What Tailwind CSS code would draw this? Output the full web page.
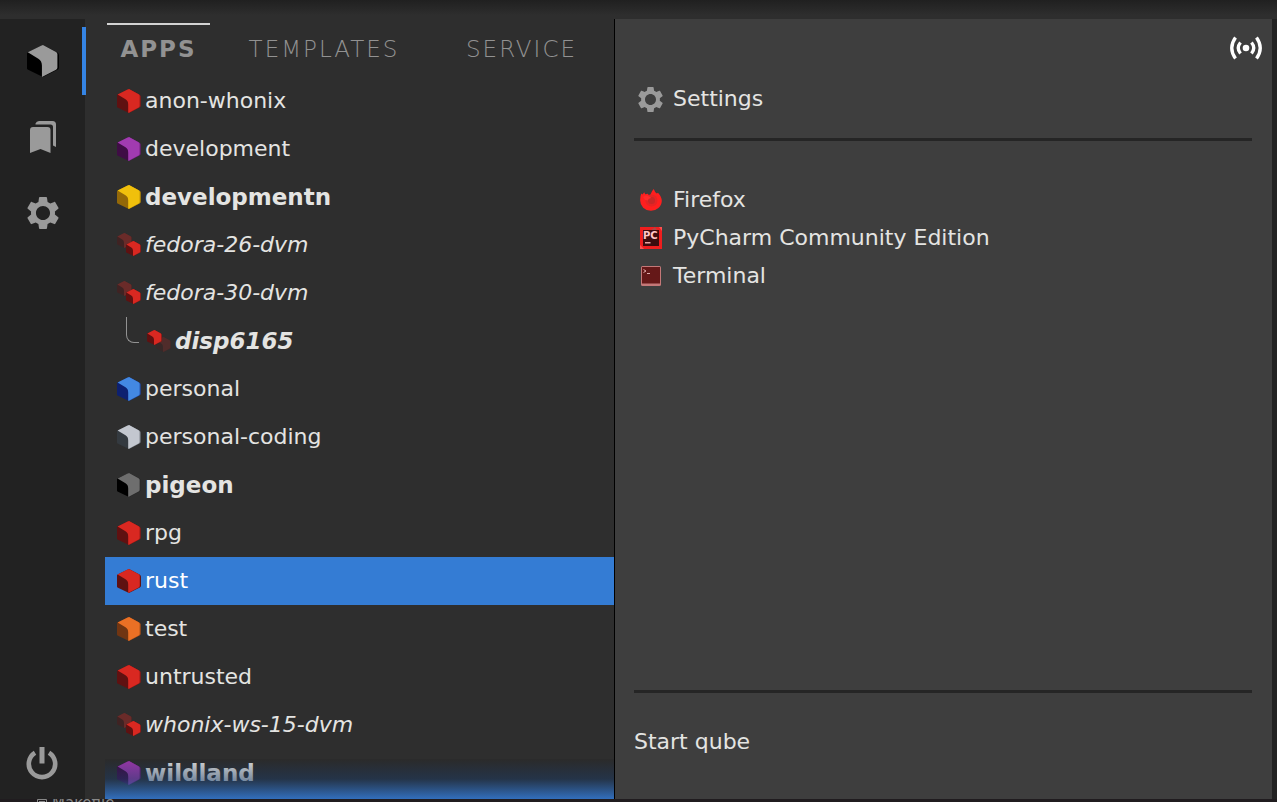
<!DOCTYPE html>
<html lang="en">
<head>
<meta charset="utf-8">
<title>Qubes App Menu</title>
<script src="https://cdn.jsdelivr.net/npm/@tailwindcss/browser@4"></script>
</head>
<body class="h-screen overflow-hidden bg-[#222222] font-['DejaVu_Sans',sans-serif] text-[22px] leading-7 text-[#e4e4e2]">
<svg class="hidden">
  <symbol id="cube-hard" viewBox="0 0 24 24">
    <path d="M12 0 22.500 5.500Q24 6.300 24 7.500V16.800Q24 18 22.800 18.600L12 24 .5 18.400Q0 18 0 17.500V6.500Q0 6 .5 5.600Z"/>
    <path fill="currentColor" d="M12 0 21.800 5.200Q22.800 5.800 22.800 7V16.800Q22.800 17.900 21.800 18.500L11.200 24V15.500Q11.200 11.800 8.500 10.300L.6 5.500 10.500.5Q11.500 0 12 0Z"/>
  </symbol>
  <symbol id="cube" viewBox="0 0 24 24">
    <path d="M12 0 22.300 5.500Q23.700 6.300 23.700 7.500V16.800Q23.700 18 22.500 18.600L12 24 .5 18.400Q0 18 0 17.500V6.500Q0 6 .5 5.600Z"/>
    <path fill="currentColor" opacity=".45" d="M12 0 22.300 5.500Q23.700 6.300 23.700 7.500V16.800Q23.700 18 22.500 18.600L12 24Z"/>
    <path fill="currentColor" d="M12 0 21.500 5.200Q22.600 5.800 22.600 7V16.800Q22.600 17.900 21.500 18.500L11.200 24V15.500Q11.200 11.800 8.500 10.300L.6 5.500 10.500.5Q11.500 0 12 0Z"/>
  </symbol>
  <symbol id="dvm" viewBox="0 0 24 24">
    <g opacity=".35"><use href="#cube" x="0" y="0" width="15" height="15"/></g>
    <use href="#cube" x="9" y="8" width="15" height="15"/>
  </symbol>
  <symbol id="disp" viewBox="0 0 24 24">
    <g opacity=".2"><use href="#cube" x="9" y="8" width="15" height="15"/></g>
    <use href="#cube" x="0" y="1" width="15" height="15"/>
  </symbol>
  <symbol id="gear" viewBox="2 2 20 20">
    <path fill="currentColor" d="M19.430 12.980c.04-.32.07-.64.07-.98s-.03-.66-.07-.98l2.110-1.650c.19-.15.24-.42.12-.64l-2-3.460c-.12-.22-.39-.3-.61-.22l-2.490 1c-.52-.4-1.080-.73-1.690-.98l-.38-2.650C14.460 2.180 14.250 2 14 2h-4c-.25 0-.46.18-.49.42l-.38 2.650c-.61.25-1.170.59-1.690.98l-2.490-1c-.23-.09-.49 0-.61.22l-2 3.460c-.13.22-.07.49.12.64l2.110 1.650c-.04.32-.07.65-.07.98s.03.66.07.98l-2.110 1.650c-.19.15-.24.42-.12.64l2 3.460c.12.22.39.3.61.22l2.490-1c.52.4 1.080.73 1.690.98l.38 2.650c.03.24.24.42.49.42h4c.25 0 .46-.18.49-.42l.38-2.650c.61-.25 1.170-.59 1.690-.98l2.490 1c.23.09.49 0 .61-.22l2-3.460c.12-.22.07-.49-.12-.64l-2.110-1.650zM12 16.400c-2.430 0-4.400-1.970-4.400-4.400s1.970-4.400 4.400-4.400 4.400 1.970 4.400 4.400-1.970 4.400-4.400 4.400z"/>
  </symbol>
</svg>
<div class="flex h-full flex-col">
  <div class="h-[19px] shrink-0 bg-linear-to-b from-[#202020] to-[#2e2e2e] to-80%"></div>
  <div class="grid min-h-0 flex-1 grid-cols-[85px_529fr_658fr_5px] grid-rows-1">
    <nav class="relative z-10 flex flex-col bg-[#222222] pt-2 text-[#9a9a9a]" aria-label="Pages">
      <button class="-mr-px flex h-[68px] items-center justify-center border-r-4 border-[#3584e4]" aria-label="Qubes"><svg class="ml-1 size-8 fill-black"><use href="#cube-hard"/></svg></button>
      <button class="mt-2 flex h-[68px] items-center justify-center" aria-label="Favorites">
        <svg class="h-8 w-[26px]" viewBox="0 0 26 32" fill="currentColor"><path d="M3 6H17.500Q20.500 6 20.500 9V32L10.500 28 0 32V9Q0 6 3 6Z"/><path d="M5.500 3.500V2.500Q6.500 0 9 0H22.500Q26 0 26 3.500V26L23 24.500V6Q23 3.500 20.500 3.500Z"/></svg>
      </button>
      <button class="mt-2 flex h-[68px] items-center justify-center" aria-label="Settings"><svg class="size-8"><use href="#gear"/></svg></button>
      <button class="mt-auto flex h-[72px] items-center justify-center pr-0.5" aria-label="Power">
        <svg class="h-[33px] w-8" viewBox="0 0 32 33" fill="none" stroke="currentColor"><path stroke-width="4.600" d="M9 5.700A13.200 13.200 0 1 0 23 5.700"/><path stroke-width="5" d="M16 0V16.500"/></svg>
      </button>
    </nav>
    <section class="flex min-h-0 min-w-0 flex-col bg-[#2e2e2e] pl-5">
      <div class="flex h-[58px] shrink-0 pt-1 pl-0.5 text-[23px] tracking-[2px] text-[#929292]" role="tablist">
        <button class="h-[50px] w-[103px] border-t-2 border-[#d3d3d3] font-bold" role="tab" aria-selected="true">APPS</button>
        <button class="h-[50px] w-[228px] border-t-2 border-transparent font-extralight" role="tab">TEMPLATES</button>
        <button class="h-[50px] w-[167px] border-t-2 border-transparent font-extralight" role="tab">SERVICE</button>
      </div>
      <div class="relative min-h-0 flex-1 overflow-hidden">
        <ul>
          <li><button class="flex h-12 w-full items-center gap-1 pl-3"><svg class="size-6 fill-[#5f1111] text-[#d92821]"><use href="#cube"/></svg>anon-whonix</button></li>
          <li><button class="flex h-12 w-full items-center gap-1 pl-3"><svg class="size-6 fill-[#3f0d45] text-[#a13bb0]"><use href="#cube"/></svg>development</button></li>
          <li><button class="flex h-12 w-full items-center gap-1 pl-3 text-[23px] font-bold"><svg class="size-6 fill-[#936808] text-[#f0c00c]"><use href="#cube"/></svg>developmentn</button></li>
          <li><button class="flex h-12 w-full items-center gap-1 pl-3 italic"><svg class="size-6 fill-[#5f1111] text-[#d92821]"><use href="#dvm"/></svg>fedora-26-dvm</button></li>
          <li><button class="flex h-12 w-full items-center gap-1 pl-3 italic"><svg class="size-6 fill-[#5f1111] text-[#d92821]"><use href="#dvm"/></svg>fedora-30-dvm</button></li>
          <li><button class="flex h-12 w-full items-center gap-1 pl-[21px] text-[23px] font-bold italic"><span class="mr-1 mb-[22px] h-[26px] w-[13px] rounded-bl-lg border-b border-l border-[#929292]"></span><svg class="size-6 fill-[#5f1111] text-[#d92821]"><use href="#disp"/></svg>disp6165</button></li>
          <li><button class="flex h-12 w-full items-center gap-1 pl-3"><svg class="size-6 fill-[#0d2070] text-[#4388e2]"><use href="#cube"/></svg>personal</button></li>
          <li><button class="flex h-12 w-full items-center gap-1 pl-3"><svg class="size-6 fill-[#343a40] text-[#c3c7cf]"><use href="#cube"/></svg>personal-coding</button></li>
          <li><button class="flex h-12 w-full items-center gap-1 pl-3 text-[23px] font-bold"><svg class="size-6 fill-black text-[#6e6e6e]"><use href="#cube"/></svg>pigeon</button></li>
          <li><button class="flex h-12 w-full items-center gap-1 pl-3"><svg class="size-6 fill-[#5f1111] text-[#d92821]"><use href="#cube"/></svg>rpg</button></li>
          <li><button class="flex h-12 w-full items-center gap-1 bg-[#347cd4] pl-3 text-white"><svg class="size-6 fill-[#5f1111] text-[#d92821]"><use href="#cube-hard"/></svg>rust</button></li>
          <li><button class="flex h-12 w-full items-center gap-1 pl-3"><svg class="size-6 fill-[#703512] text-[#ea7025]"><use href="#cube"/></svg>test</button></li>
          <li><button class="flex h-12 w-full items-center gap-1 pl-3"><svg class="size-6 fill-[#5f1111] text-[#d92821]"><use href="#cube"/></svg>untrusted</button></li>
          <li><button class="flex h-12 w-full items-center gap-1 pl-3 italic"><svg class="size-6 fill-[#5f1111] text-[#d92821]"><use href="#dvm"/></svg>whonix-ws-15-dvm</button></li>
          <li><button class="flex h-12 w-full items-center gap-1 pl-3 text-[23px] font-bold"><svg class="size-6 fill-[#3f0d45] text-[#a13bb0]"><use href="#cube"/></svg>wildland</button></li>
        </ul>
        <div class="pointer-events-none absolute inset-x-0 bottom-0 h-10 bg-linear-to-b from-black/5 via-[#1b3a63]/50 to-[#326fbd]"></div>
      </div>
    </section>
    <main class="flex min-w-0 flex-col border-l border-black bg-[#3e3e3e] pr-5 pl-[19px]">
      <button class="-mr-2.5 mt-[17px] h-6 w-8 self-end text-white" aria-label="Network connected">
        <svg class="h-6 w-8" viewBox="0 0 32 24" fill="none" stroke="currentColor" stroke-width="3.300"><circle cx="16" cy="12" r="3.300" fill="currentColor" stroke="none"/><path d="M10.500 6.500Q6 12 10.500 17.500M21.500 6.500Q26 12 21.500 17.500M5.500 1.500Q-2 12 5.500 22.500M26.500 1.500Q34 12 26.500 22.500"/></svg>
      </button>
      <button class="mt-5 flex h-[38px] items-center gap-2.5 pl-1"><svg class="size-[25px] text-[#9a9a9a]"><use href="#gear"/></svg>Settings</button>
      <hr class="mt-5 border-t-3 border-[#252525]">
      <ul class="mt-10">
        <li><button class="flex h-[38px] items-center gap-[11px] pl-1.5">
          <svg class="size-[22px]" viewBox="0 0 22 22"><path fill="#ff1f1f" d="M1.300 4.500 2.500 5.500 4.200 3.200 5.200 5.200 8 4.800 8.500 6 10.500 5.500Q11.500 2 13.800 0 14.500 2.800 16.800 4.500L18 3.800Q21.800 8 21.800 12A10.800 10 0 0 1 .2 11.500Q0 7.500 1.300 4.500Z"/><circle cx="11.500" cy="11.500" r="6" fill="#e62424"/><circle cx="11.500" cy="11.500" r="3.500" fill="#c92828"/><path fill="#ff2b2b" d="M3 8Q6 5.500 9 7.500 11 8 11 9L8.500 10 8 11.500 5 11Z"/></svg>Firefox</button></li>
        <li><button class="flex h-[38px] items-center gap-[11px] pl-1.5">
          <svg class="size-[22px]" viewBox="0 0 22 22"><path fill="#ef1e1e" d="M0 0H22V22H0Z"/><path fill="#b04545" d="M11 3 15 0 17 3Z"/><path fill="#ff5050" d="M19 0 22 4V0ZM0 22V18L4 22Z"/><path fill="#3c0c0e" d="M3 3H19V19H3Z"/><text x="3" y="12" font-size="10" font-weight="700" fill="#ffc7c7">PC</text><path fill="#e8a5a5" d="M5 15H10.500V16.500H5Z"/></svg>PyCharm Community Edition</button></li>
        <li><button class="flex h-[38px] items-center gap-[11px] pl-1.5">
          <svg class="size-[22px]" viewBox="0 0 22 22"><rect x="1" y="1" width="20" height="20" rx="1.500" fill="#c47878"/><path fill="#651818" d="M2 2H20V18.500H2Z"/><path fill="none" stroke="#dfabab" d="M3.500 4.500 6 6 3.500 7.500M7 8.500H10"/></svg>Terminal</button></li>
      </ul>
      <hr class="mt-auto border-t-3 border-[#252525]">
      <button class="mt-7 mb-9 h-[42px] self-start">Start qube</button>
    </main>
  </div>
  <div class="flex h-[3px] shrink-0 overflow-hidden bg-[#201c1f] pl-9 text-[15px] leading-[9px] text-[#888888]"><svg class="mr-1 h-3 w-3 shrink-0" viewBox="0 0 12 12"><path fill="none" stroke="currentColor" d="M1.500.5H10.500V12H1.500ZM3 2.500H9"/></svg><span>Makefile</span></div>
</div>
</body>
</html>
